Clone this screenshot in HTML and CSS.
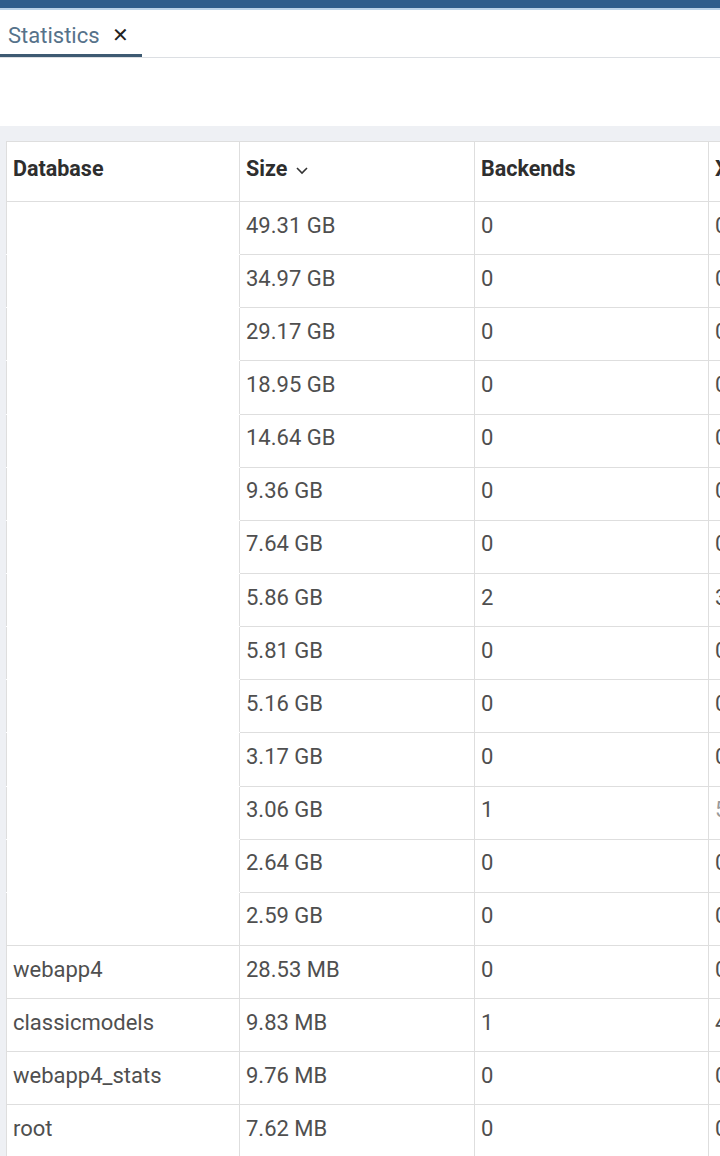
FILE: index.html
```html
<!DOCTYPE html>
<html>
<head>
<meta charset="utf-8">
<link rel="stylesheet" href="styles.css">
</head>
<body>
<div class="topbar"></div>
<div class="tabs">
  <div class="tab"><span class="tab-label">Statistics</span><span class="tab-close">✕</span></div>
</div>
<div class="blank"></div>
<div class="panel">
  <table class="grid">
    <colgroup><col class="c1"><col class="c2"><col class="c3"><col class="c4"></colgroup>
    <thead>
      <tr><th>Database</th><th>Size <svg class="caret" width="16" height="10" viewBox="0 0 16 10"><path d="M3 3 L8 8 L13 3" fill="none" stroke="#333" stroke-width="1.6"/></svg></th><th>Backends</th><th>Xact committed</th></tr>
    </thead>
    <tbody>
      <tr><td class="hidden"></td><td>49.31 GB</td><td>0</td><td>0</td></tr>
      <tr><td class="hidden"></td><td>34.97 GB</td><td>0</td><td>0</td></tr>
      <tr><td class="hidden"></td><td>29.17 GB</td><td>0</td><td>0</td></tr>
      <tr><td class="hidden"></td><td>18.95 GB</td><td>0</td><td>0</td></tr>
      <tr><td class="hidden"></td><td>14.64 GB</td><td>0</td><td>0</td></tr>
      <tr><td class="hidden"></td><td>9.36 GB</td><td>0</td><td>0</td></tr>
      <tr><td class="hidden"></td><td>7.64 GB</td><td>0</td><td>0</td></tr>
      <tr><td class="hidden"></td><td>5.86 GB</td><td>2</td><td>3</td></tr>
      <tr><td class="hidden"></td><td>5.81 GB</td><td>0</td><td>0</td></tr>
      <tr><td class="hidden"></td><td>5.16 GB</td><td>0</td><td>0</td></tr>
      <tr><td class="hidden"></td><td>3.17 GB</td><td>0</td><td>0</td></tr>
      <tr><td class="hidden"></td><td>3.06 GB</td><td>1</td><td><span class="faint">5</span></td></tr>
      <tr><td class="hidden"></td><td>2.64 GB</td><td>0</td><td>0</td></tr>
      <tr><td class="hidden last"></td><td>2.59 GB</td><td>0</td><td>0</td></tr>
      <tr><td>webapp4</td><td>28.53 MB</td><td>0</td><td>0</td></tr>
      <tr><td>classicmodels</td><td>9.83 MB</td><td>1</td><td>4</td></tr>
      <tr><td>webapp4_stats</td><td>9.76 MB</td><td>0</td><td>0</td></tr>
      <tr><td>root</td><td>7.62 MB</td><td>0</td><td>0</td></tr>
    </tbody>
  </table>
</div>
</body>
</html>
```
FILE: styles.css
```css
html, body {
  margin: 0;
  padding: 0;
  width: 720px;
  height: 1156px;
  overflow: hidden;
  background: #ffffff;
  font-family: Roboto, "Liberation Sans", sans-serif;
}
.topbar {
  height: 8px;
  background: #2e5e8c;
  border-bottom: 2px solid #b9d3e8;
}
.tabs {
  height: 47px;
  border-bottom: 1px solid #dcdfe3;
  display: flex;
  align-items: flex-end;
}
.tab {
  width: 142px;
  height: 44px;
  box-sizing: border-box;
  border-bottom: 3px solid #3e5a72;
  display: flex;
  align-items: center;
  padding-left: 8px;
  padding-top: 3px;
  gap: 12px;
}
.tab-label {
  font-size: 22px;
  color: #56728a;
}
.tab-close {
  font-size: 20px;
  color: #222;
}
.blank {
  height: 68px;
}
.panel {
  background: #eef0f4;
  height: 1100px;
  padding: 15px 0 0 6px;
}
.grid {
  border-collapse: collapse;
  background: #ffffff;
  table-layout: fixed;
  width: 940px;
  font-size: 22px;
  color: #4f4f4f;
}
.c1 { width: 233px; }
.c2 { width: 235px; }
.c3 { width: 234px; }
.c4 { width: 238px; }
.grid th, .grid td {
  border: 1px solid #dedede;
  text-align: left;
  padding: 0 0 6px 6px;
  white-space: nowrap;
  overflow: hidden;
}
.grid th {
  height: 53px;
  font-weight: 700;
  color: #2e2e2e;
  font-size: 21.5px;
}
.grid td {
  height: 46.15px;
}
.grid td.hidden {
  border-top-color: #ffffff;
  border-bottom-color: #ffffff;
}
.grid td.hidden.last {
  border-bottom-color: #dedede;
}
.caret {
  vertical-align: middle;
  margin-left: 1px;
}
.faint {
  color: #9a9a9a;
}
```
